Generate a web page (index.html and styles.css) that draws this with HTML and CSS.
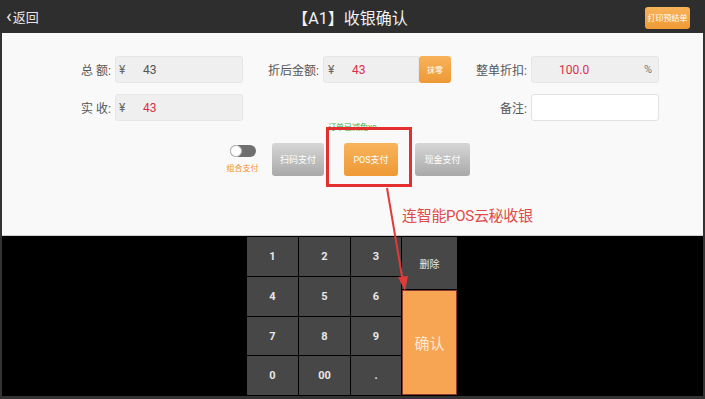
FILE: index.html
```html
<!DOCTYPE html>
<html lang="zh-CN">

<head>
  <meta charset="utf-8">
  <meta name="viewport" content="width=device-width, initial-scale=1.0">
  <title>收银确认</title>
  <link rel="stylesheet" href="styles.css">
</head>

<body>
  <div class="app">
    <div class="topbar">
      <div class="back"><span class="chev">‹</span>返回</div>
      <div class="title">【A1】收银确认</div>
      <div class="right"><button class="print-btn">打印预结单</button></div>
    </div>

    <div class="panel">
      <div class="row">
        <label class="lbl lbl-first">总 额:</label>
        <div class="field field-wide"><span class="cur">¥</span><span class="val">43</span></div>
        <label class="lbl">折后金额:</label>
        <div class="field field-mid"><span class="cur">¥</span><span class="val red">43</span></div>
        <button class="round-btn">抹零</button>
        <label class="lbl">整单折扣:</label>
        <div class="field field-wide field-rate"><span class="val red">100.0</span><span class="pct">%</span></div>
      </div>
      <div class="row row-second">
        <label class="lbl lbl-first">实 收:</label>
        <div class="field field-wide"><span class="cur">¥</span><span class="val red">43</span></div>
        <div class="spacer"></div>
        <label class="lbl">备注:</label>
        <div class="field field-wide field-note"></div>
      </div>
      <div class="note">订单已减免¥0</div>
      <div class="pay-row">
        <div class="combo">
          <div class="toggle"><span class="knob"></span></div>
          <div class="combo-text">组合支付</div>
        </div>
        <button class="pay-btn gray scan">扫码支付</button>
        <button class="pay-btn orange pos">POS支付</button>
        <button class="pay-btn gray cash">现金支付</button>
      </div>
    </div>

    <div class="pad-area">
      <div class="keys">
        <button class="key">1</button>
        <button class="key">2</button>
        <button class="key">3</button>
        <button class="key">4</button>
        <button class="key">5</button>
        <button class="key">6</button>
        <button class="key">7</button>
        <button class="key">8</button>
        <button class="key">9</button>
        <button class="key">0</button>
        <button class="key">00</button>
        <button class="key">.</button>
      </div>
      <div class="side">
        <button class="key del">删除</button>
        <button class="confirm">确认</button>
      </div>
    </div>

    <div class="bottom-strip"></div>

    <!-- annotation overlay -->
    <div class="mark-box"></div>
    <div class="mark-text">连智能POS云秘收银</div>
    <svg class="mark-arrow" width="705" height="399" viewBox="0 0 705 399">
      <line x1="387" y1="188" x2="403" y2="282" stroke="#e23a3a" stroke-width="2" />
      <polygon points="405,291 398,277 408,276" fill="#e23a3a" />
    </svg>
  </div>
</body>

</html>
```

FILE: styles.css
```css
body,
html {
  margin: 0;
  padding: 0;
  background: #333;
  font-family: Roboto, "Noto Sans CJK SC", sans-serif;
}

button {
  font-family: inherit;
  border: none;
  padding: 0;
  cursor: pointer;
}

.app {
  width: 705px;
  height: 399px;
  position: relative;
  overflow: hidden;
  display: flex;
  flex-direction: column;
  background: #333;
}

.topbar {
  height: 33px;
  background: #2e2e2e;
  display: grid;
  grid-template-columns: 1fr auto 1fr;
  align-items: center;
  padding: 0 15px 0 6px;
  color: #e6e6e6;
}

.back {
  font-size: 13px;
  display: flex;
  align-items: center;
}

.chev {
  font-size: 19px;
  line-height: 1;
  margin-right: 1px;
  margin-top: -3px;
}

.title {
  font-size: 16px;
  color: #f2f2f2;
  margin-left: 4px;
}

.right {
  display: flex;
  justify-content: flex-end;
}

.print-btn {
  width: 45px;
  height: 22px;
  border-radius: 3px;
  background: linear-gradient(#f9b35a, #ef9a34);
  color: #fff;
  font-size: 8px;
  margin-top: 2px;
}

.panel {
  height: 203px;
  margin: 0 2px;
  background: #f9f9f9;
  border-bottom: 1px solid #cfcfcf;
  box-sizing: border-box;
  padding-top: 23px;
  color: #555;
  font-size: 12px;
}

.row {
  display: flex;
  height: 27px;
  align-items: center;
}

.row-second {
  margin-top: 11px;
}

.lbl {
  width: 80px;
  box-sizing: border-box;
  text-align: right;
  padding-right: 4px;
  color: #555;
}

.lbl-first {
  width: 113px;
}

.spacer {
  width: 208px;
}

.field {
  height: 27px;
  box-sizing: border-box;
  background: #efefef;
  border: 1px solid #e6e6e6;
  border-radius: 3px;
  display: flex;
  align-items: center;
  padding-left: 3px;
  font-size: 12px;
}

.field-wide {
  width: 128px;
}

.field-mid {
  width: 96px;
  border-radius: 3px 0 0 3px;
  padding-left: 4px;
}

.field-rate {
  padding-left: 27px;
  justify-content: space-between;
  padding-right: 6px;
}

.field-note {
  background: #fff;
  border-color: #e2e2e2;
}

.cur {
  color: #666;
  width: 24px;
}

.val {
  color: #555;
}

.red {
  color: #d9304a;
}

.pct {
  color: #777;
  font-size: 11px;
}

.round-btn {
  width: 32px;
  height: 27px;
  border-radius: 3px;
  background: linear-gradient(#f8b25a, #ee9936);
  color: #fff;
  font-size: 8px;
}

.note {
  margin: 1px 0 0 0;
  padding-left: 326px;
  font-size: 8px;
  line-height: 11px;
  color: #3fae3a;
}

.pay-row {
  display: flex;
  align-items: flex-start;
  margin-top: 10px;
  padding-left: 225px;
}

.combo {
  width: 31px;
  display: flex;
  flex-direction: column;
  align-items: center;
  padding-top: 2px;
  margin-right: 14px;
}

.toggle {
  width: 26px;
  height: 12px;
  border-radius: 6px;
  background: #6f6f6f;
  position: relative;
}

.knob {
  position: absolute;
  left: 0;
  top: 0;
  width: 12px;
  height: 12px;
  box-sizing: border-box;
  border-radius: 50%;
  background: #fff;
  border: 1px solid #bbb;
}

.combo-text {
  margin-top: 5px;
  font-size: 8px;
  color: #f0902a;
  white-space: nowrap;
}

.pay-btn {
  height: 33px;
  border-radius: 3px;
  color: #fff;
  font-size: 9px;
}

.gray {
  background: linear-gradient(#d6d6d6, #a9a9a9);
}

.orange {
  background: linear-gradient(#f8b35b, #ee9935);
}

.scan {
  width: 52px;
}

.pos {
  width: 54px;
  margin-left: 20px;
}

.cash {
  width: 55px;
  margin-left: 17px;
}

.pad-area {
  flex: 1;
  margin: 0 2px;
  background: #000;
  display: flex;
  padding: 1px 0 0 245px;
}

.keys {
  display: grid;
  grid-template-columns: 51px 51px 50px;
  grid-template-rows: 39px 39px 38px 39px;
  gap: 1px;
}

.key {
  background: #474747;
  color: #e8e8e8;
  font-size: 11px;
  font-weight: bold;
}

.side {
  width: 55px;
  margin-left: 1px;
  display: flex;
  flex-direction: column;
  gap: 1px;
}

.del {
  height: 52px;
  font-weight: normal;
  font-size: 10px;
}

.confirm {
  height: 105px;
  box-sizing: border-box;
  background: #f7a553;
  border: 1px solid #8c3b33;
  color: #fde9d6;
  font-size: 15px;
}

.bottom-strip {
  height: 3px;
  background: #333;
}

.mark-box {
  position: absolute;
  left: 326px;
  top: 127px;
  width: 86px;
  height: 60px;
  box-sizing: border-box;
  border: 3px solid #e42f2f;
}

.mark-text {
  position: absolute;
  left: 402px;
  top: 204px;
  font-size: 15px;
  color: #e04a4a;
  letter-spacing: -0.3px;
}

.mark-arrow {
  position: absolute;
  left: 0;
  top: 0;
  pointer-events: none;
}
```
